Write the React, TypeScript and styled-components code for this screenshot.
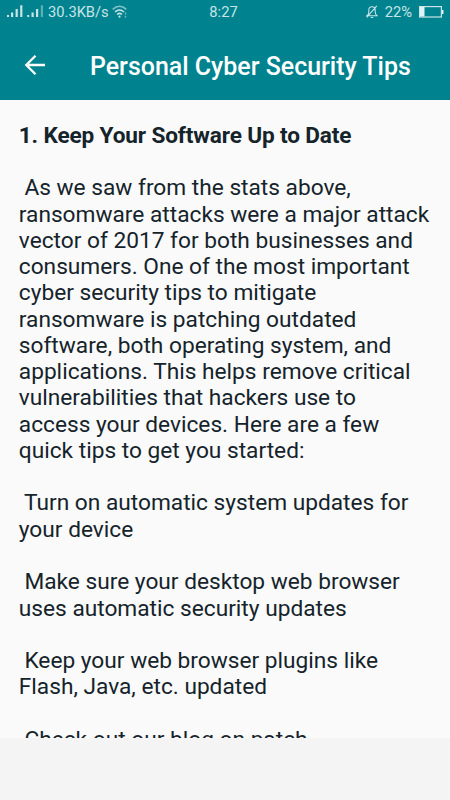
import React from "react";
import styled, { createGlobalStyle } from "styled-components";

const Global = createGlobalStyle`
  html, body { margin: 0; background: #f4f4f4; }
  * { box-sizing: border-box; }
`;
const Screen = styled.main`
  width: 450px; height: 800px; display: flex; flex-direction: column;
  overflow: hidden; background: #f4f4f4; font-family: Roboto, sans-serif;
`;
const Header = styled.header`
  height: 100px; flex: none; background: #00838f; color: #fff;
`;
const StatusBar = styled.div`
  height: 24px; display: grid; grid-template-columns: 1fr auto 1fr;
  align-items: center; padding: 0 6px 0 7px; font-size: 14.7px; color: #c9e4e7;
`;
const Group = styled.div<{ $end?: boolean }>`
  display: flex; align-items: center;
  justify-content: ${p => p.$end ? "flex-end" : "flex-start"};
  svg { flex: none; }
`;
const Speed = styled.span` margin: 0 3px 0 4px; `;
const Clock = styled.span` transform: translateX(-2px); `;
const Percent = styled.span` margin: 0 7px 0 7px; `;
const TitleBar = styled.div`
  height: 76px; display: flex; align-items: center; padding: 8px 0 0 23px;
`;
const Title = styled.h1`
  margin: 0 0 0 43px; font-size: 24.95px; font-weight: 500; white-space: nowrap;
`;
const Article = styled.article`
  height: 638px; flex: none; overflow: hidden; background: #fafafa;
  padding: 23px 0 0 18.8px; color: #15232b; font-size: 22.7px; line-height: 26.27px;
`;
const Heading = styled.h2`
  margin: 0 0 26px; font-size: 22.6px; line-height: 26.27px;
  font-weight: 700; letter-spacing: -0.14px;
`;
const Paragraph = styled.p` margin: 0 0 26.27px; white-space: pre; `;

const paragraphs = [
  " As we saw from the stats above,\nransomware attacks were a major attack\nvector of 2017 for both businesses and\nconsumers. One of the most important\ncyber security tips to mitigate\nransomware is patching outdated\nsoftware, both operating system, and\napplications. This helps remove critical\nvulnerabilities that hackers use to\naccess your devices. Here are a few\nquick tips to get you started:",
  " Turn on automatic system updates for\nyour device",
  " Make sure your desktop web browser\nuses automatic security updates",
  " Keep your web browser plugins like\nFlash, Java, etc. updated",
  " Check out our blog on patch",
];

const SignalIcons = () => (
  <svg width="37" height="14" viewBox="0 0 37 14" fill="#c9e4e7">
    <path d="M0 10h2v2H0zM4 7.5h2.2V12H4zM8.6 4h2.2v8H8.6zM13.2 .3h2.2V12h-2.2zM20.2 10h2v2h-2zM24.5 7.5h2.2V12h-2.2zM29 4h2.2v8H29z" />
    <path d="M33.8 .3H36V12h-2.2z" opacity=".45" />
  </svg>
);
const WifiIcon = () => (
  <svg width="16" height="14" viewBox="0 0 16 14" fill="none" stroke="#c9e4e7" strokeWidth="1.6">
    <path d="M.7 4.3Q7.5-1.8 14.3 4.3" opacity=".65" />
    <path d="M3 7Q7.5 3 12 7M5.1 9.5Q7.5 7.3 9.9 9.5" />
    <circle cx="7.5" cy="11.7" r="1.1" fill="#c9e4e7" stroke="none" />
    <path d="M13.5 7.5v2M13.5 10.8v2" strokeWidth="1.5" opacity=".55" />
  </svg>
);
const MutedBell = () => (
  <svg width="12" height="14" viewBox="0 0 12 14" fill="none" stroke="#c9e4e7" strokeWidth="1.1">
    <path d="M1 10.7Q2.8 9.5 2.8 7V5.2Q2.8 1.8 6 1.8T9.2 5.2V7Q9.2 9.5 11 10.7ZM4.8 12.5H7.2M.7 12.3L10.8 .9" />
  </svg>
);
const Battery = () => (
  <svg width="25" height="12" viewBox="0 0 25 12">
    <rect x=".6" y=".6" width="21.8" height="10.4" fill="none" stroke="#c9e4e7" strokeWidth="1.2" />
    <path d="M1 1H5.5V10.5H1ZM23 4H24.5V8H23Z" fill="#e0f2f3" />
  </svg>
);

export default function App() {
  return <Screen><Global />
    <Header>
      <StatusBar>
        <Group><SignalIcons /><Speed>30.3KB/s</Speed><WifiIcon /></Group>
        <Clock>8:27</Clock>
        <Group $end><MutedBell /><Percent>22%</Percent><Battery /></Group>
      </StatusBar>
      <TitleBar>
        <svg width="24" height="24" viewBox="0 0 24 24" fill="none" stroke="#fff" strokeWidth="2.3"><path d="M22 11H4M12.5 1.7L3.3 11L12.5 20.3" /></svg>
        <Title>Personal Cyber Security Tips</Title>
      </TitleBar>
    </Header>
    <Article><Heading>1. Keep Your Software Up to Date</Heading>
      {paragraphs.map(t => <Paragraph key={t}>{t}</Paragraph>)}
    </Article>
  </Screen>;
}
